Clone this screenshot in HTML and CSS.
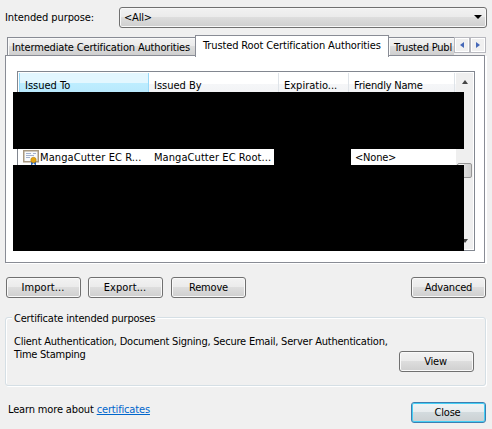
FILE: index.html
```html
<!DOCTYPE html>
<html lang="en">
<head>
<meta charset="utf-8">
<title>Certificates</title>
<link rel="stylesheet" href="styles.css">
</head>
<body>
<main class="dialog">
  <div class="purpose">
    <span class="purpose-label">Intended purpose:</span>
    <div class="select"><span>&lt;All&gt;</span><i class="arrow"></i></div>
  </div>
  <div class="tabs">
    <div class="tab first">Intermediate Certification Authorities</div>
    <div class="tab active">Trusted Root Certification Authorities</div>
    <div class="tab last">Trusted Publ</div>
    <div class="spinner">
      <b><svg width="4" height="6" viewBox="0 0 4 6"><path d="M4 0v6L0 3z"/></svg></b>
      <b><svg width="4" height="6" viewBox="0 0 4 6"><path d="M0 0v6l4-3z"/></svg></b>
    </div>
  </div>
  <section class="pane">
    <div class="list">
      <div class="content">
        <div class="header">
          <div class="col sorted">Issued To</div>
          <div class="col">Issued By</div>
          <div class="col">Expiratio...</div>
          <div class="col friendly-col">Friendly Name</div>
        </div>
        <div class="row">
          <svg class="cert" width="17" height="16" viewBox="0 0 17 16">
            <rect x=".75" y="1.75" width="14.5" height="11" fill="#f8fafc" stroke="#a89880" stroke-width="1.5"/>
            <path d="M3 4.5h5M10 4.5h3M3 6.5h8M3 8.5h4" stroke="#a4b2cf"/>
            <path d="M8 11v5h1l1.5-2 1.5 2h1v-5z" fill="#2e68bd"/>
            <circle cx="10.5" cy="11" r="2.7" fill="#e5a512" stroke="#b98008" stroke-width=".6"/>
          </svg>
          <span class="to">MangaCutter EC R...</span>
          <span class="by">MangaCutter EC Root...</span>
          <span class="friendly">&lt;None&gt;</span>
        </div>
      </div>
      <div class="scroll"><i class="up"></i><i class="thumb"></i><i class="down"></i></div>
    </div>
    <div class="mask mask-top"></div>
    <div class="mask mask-date"></div>
    <div class="mask mask-bottom"></div>
  </section>
  <div class="actions">
    <div class="button dots">Import...</div>
    <div class="button dots">Export...</div>
    <div class="button remove">Remove</div>
    <div class="button advanced">Advanced</div>
  </div>
  <section class="group">
    <span class="legend">Certificate intended purposes</span>
    <p class="uses">Client Authentication, Document Signing, Secure Email, Server Authentication,<br><span class="line2">Time Stamping</span></p>
    <div class="button view">View</div>
  </section>
  <footer class="footer">
    <span class="learn">Learn more about <a>certificates</a></span>
    <div class="button close">Close</div>
  </footer>
</main>
</body>
</html>
```
FILE: styles.css
```css
* { box-sizing: border-box; }
body {
  margin: 0;
  background: #f0f0f0;
  color: #000;
  font: 11px/13px "DejaVu Sans Condensed", "DejaVu Sans", sans-serif;
  font-stretch: condensed;
  letter-spacing: -0.2px;
  white-space: nowrap;
}
.dialog { width: 492px; height: 429px; overflow: hidden; padding: 7px 5px 0; display: flex; flex-direction: column; }
.purpose { display: flex; height: 21px; align-items: center; }
.purpose-label { width: 114px; letter-spacing: -0.1px; }
.select {
  width: 368px; height: 21px; display: flex; align-items: center; justify-content: space-between;
  border: 1px solid #707070; border-radius: 3px; padding: 0 4px 1px;
  background: linear-gradient(#f2f2f2, #ebebeb 48%, #dddddd 50%, #cfcfcf);
  box-shadow: inset 0 0 0 1px #f8f8f8;
}
.arrow { border: 4px solid transparent; border-top-color: #000; border-bottom: 0; width: 0; height: 0; }
.tabs { display: flex; height: 20px; margin: 7px 0 0 2px; align-items: flex-end; position: relative; z-index: 1; }
.tab {
  height: 18px; border: 1px solid #898c95; border-bottom: 0; padding: 3px 0 0 4px;
  background: linear-gradient(#f2f2f2, #ebebeb 48%, #dddddd 50%, #cfcfcf);
  box-shadow: inset 1px 1px #fafafa;
}
.first { width: 188px; border-right: 0; letter-spacing: -0.17px; }
.active { width: 194px; height: 22px; margin-bottom: -2px; padding: 3px 0 0 7px; background: #fff; box-shadow: none; letter-spacing: -0.12px; }
.last { width: 65px; border-left: 0; border-right: 0; padding-left: 5px; letter-spacing: -0.2px; }
.spinner { display: flex; align-self: flex-start; margin-top: 2px; background: #fff; }
.spinner b { width: 16px; height: 16px; border: 1px solid #b8b9bf; box-shadow: inset 0 0 0 1px #fff; background: #f0f0f0; display: grid; place-items: center; }
.spinner svg { fill: #4668b8; }
.pane {
  position: relative; width: 480px; height: 208px; border: 1px solid #898c95; background: #fff;
  box-shadow: 1px 1px #fff, 2px 1px #fff; padding: 15px 0 0 11px;
}
.list { width: 458px; height: 180px; border: 1px solid #828790; display: flex; padding: 1px; }
.content { width: 439px; }
.header { height: 24px; display: grid; grid-template-columns: 130px 130px 70px 106px; background: linear-gradient(#fff 45%, #f5f6f8 47%, #f1f2f4); }
.col { padding: 6px 0 0 5px; border-right: 1px solid #dfe4e9; letter-spacing: 0; }
.friendly-col { letter-spacing: -0.2px; }
.sorted { background: linear-gradient(#e3f7ff 40%, #bdedff 42%, #b7e7fb); border-left: 1px solid #96d9f9; border-right-color: #96d9f9; }
.row { height: 16px; margin-top: 52px; display: flex; align-items: center; padding-left: 4px; }
.cert { flex: none; }
.to { width: 114px; letter-spacing: 0.1px; }
.by { width: 201px; letter-spacing: 0.07px; }
.scroll { width: 17px; background: #efefef; display: flex; flex-direction: column; align-items: center; }
.up { margin-top: 7px; border: 3px solid transparent; border-bottom: 4px solid #444; border-top: 0; }
.thumb { margin-top: 79px; width: 15px; height: 15px; border: 1px solid #979797; border-radius: 2px; background: linear-gradient(90deg, #f3f3f3 45%, #dcdcdc 50%, #cfcfcf); }
.down { margin-top: 61px; border: 3px solid transparent; border-top: 4px solid #444; border-bottom: 0; }
.mask { position: absolute; background: #000; left: 7px; }
.mask-top { top: 36px; width: 451px; height: 57px; }
.mask-date { left: 268px; top: 93px; width: 77px; height: 16px; }
.mask-bottom { top: 109px; width: 451px; height: 86px; }
.actions { display: flex; margin-top: 14px; padding: 0 1px; gap: 7px; }
.button {
  width: 75px; height: 21px; border: 1px solid #707070; border-radius: 3px; text-align: center; padding: 3px 2px 0 0;
  background: linear-gradient(#f2f2f2, #ebebeb 48%, #dddddd 50%, #cfcfcf);
  box-shadow: inset 0 0 0 1px #f9f9f9;
}
.dots { letter-spacing: 0.1px; padding-right: 1px; }
.remove { margin-left: 1px; padding-right: 0; }
.advanced { margin-left: auto; padding-right: 0; }
.group {
  width: 481px; height: 69px; margin-top: 19px; border: 1px solid #d5dfe5; border-radius: 3px;
  box-shadow: 1px 1px #fff, inset 1px 1px #fff; display: grid; grid-template-columns: 393px 75px; align-content: start;
}
.legend { grid-column: 1 / -1; justify-self: start; background: #f0f0f0; margin: -6px 0 0 6px; padding: 0 2px; height: 15px; }
.uses { margin: 8px 0 0 8px; letter-spacing: -0.22px; }
.line2 { letter-spacing: -0.25px; }
.view { margin-top: 24px; }
.footer { display: flex; justify-content: space-between; margin: 16px 1px 0 3px; }
.learn { padding-top: 1px; letter-spacing: -0.15px; }
.learn a { color: #0066cc; text-decoration: underline; }
.close { border-color: #3c7fb1; background: linear-gradient(#f0f4f5, #e7ecee 48%, #d3dbde 50%, #cbd0d2); box-shadow: inset 0 0 0 1px #45cff5; }
```
